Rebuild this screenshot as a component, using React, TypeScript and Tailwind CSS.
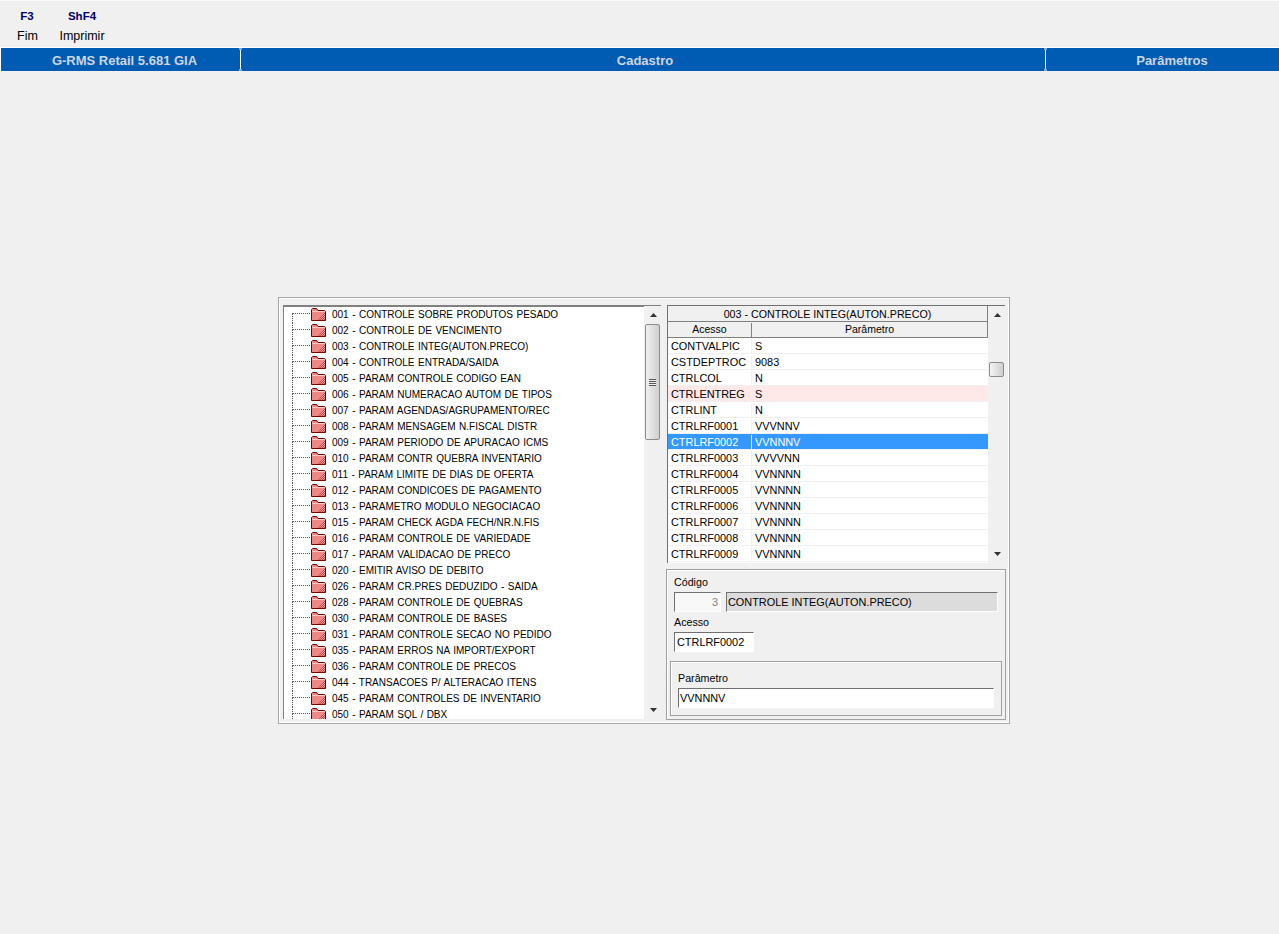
import React from 'react';

const treeItems = [
  '001 - CONTROLE SOBRE PRODUTOS PESADO',
  '002 - CONTROLE DE VENCIMENTO',
  '003 - CONTROLE INTEG(AUTON.PRECO)',
  '004 - CONTROLE ENTRADA/SAIDA',
  '005 - PARAM CONTROLE CODIGO EAN',
  '006 - PARAM NUMERACAO AUTOM DE TIPOS',
  '007 - PARAM AGENDAS/AGRUPAMENTO/REC',
  '008 - PARAM MENSAGEM N.FISCAL DISTR',
  '009 - PARAM PERIODO DE APURACAO ICMS',
  '010 - PARAM CONTR QUEBRA INVENTARIO',
  '011 - PARAM LIMITE DE DIAS DE OFERTA',
  '012 - PARAM CONDICOES DE PAGAMENTO',
  '013 - PARAMETRO MODULO NEGOCIACAO',
  '015 - PARAM CHECK AGDA FECH/NR.N.FIS',
  '016 - PARAM CONTROLE DE VARIEDADE',
  '017 - PARAM VALIDACAO DE PRECO',
  '020 - EMITIR AVISO DE DEBITO',
  '026 - PARAM CR.PRES DEDUZIDO - SAIDA',
  '028 - PARAM CONTROLE DE QUEBRAS',
  '030 - PARAM CONTROLE DE BASES',
  '031 - PARAM CONTROLE SECAO NO PEDIDO',
  '035 - PARAM ERROS NA IMPORT/EXPORT',
  '036 - PARAM CONTROLE DE PRECOS',
  '044 - TRANSACOES P/ ALTERACAO ITENS',
  '045 - PARAM CONTROLES DE INVENTARIO',
  '050 - PARAM SQL / DBX',
];

const gridRows = [
  ['CONTVALPIC', 'S'],
  ['CSTDEPTROC', '9083'],
  ['CTRLCOL', 'N'],
  ['CTRLENTREG', 'S'],
  ['CTRLINT', 'N'],
  ['CTRLRF0001', 'VVVNNV'],
  ['CTRLRF0002', 'VVNNNV'],
  ['CTRLRF0003', 'VVVVNN'],
  ['CTRLRF0004', 'VVNNNN'],
  ['CTRLRF0005', 'VVNNNN'],
  ['CTRLRF0006', 'VVNNNN'],
  ['CTRLRF0007', 'VVNNNN'],
  ['CTRLRF0008', 'VVNNNN'],
  ['CTRLRF0009', 'VVNNNN'],
];

const FolderIcon = () => (
  <svg width="15" height="13" viewBox="0 0 15 13" className="shrink-0">
    <defs>
      <pattern id="dither" width="2" height="2" patternUnits="userSpaceOnUse">
        <rect width="2" height="2" fill="#f09a9a" />
        <rect width="1" height="1" fill="#c84848" />
        <rect x="1" y="1" width="1" height="1" fill="#c84848" />
      </pattern>
    </defs>
    <path d="M0.5 12.5V1.5L1.5 0.5H5.5L7 2.5H13.5L14.5 3.5V12.5Z" fill="#ee8888" stroke="#7a0000" />
    <path d="M1 3.5H14" stroke="#ffc8c8" />
    <path d="M6 12L14 4V12Z" fill="url(#dither)" />
  </svg>
);

const ArrowUp = () => (
  <svg width="7" height="4" viewBox="0 0 7 4"><path d="M3.5 0L7 4H0Z" fill="#333" /></svg>
);

const ArrowDown = () => (
  <svg width="7" height="4" viewBox="0 0 7 4"><path d="M0 0H7L3.5 4Z" fill="#333" /></svg>
);

const BarSeparator = () => (
  <div className="flex w-[3px] shrink-0 flex-col items-center">
    <div className="h-[2px] w-[3px] bg-[#7fa8d8]" />
    <div className="w-px flex-1 bg-white" />
    <div className="h-[2px] w-[3px] bg-[#7fa8d8]" />
  </div>
);

const TreeRow = ({ label, first }: { label: string; first: boolean }) => (
  <div className="flex h-[16px] items-center whitespace-nowrap pl-[8px]">
    <div className="flex h-[16px] w-[18px] shrink-0 flex-col">
      <div className={`h-[8px] border-b border-dotted border-b-[#555] ${first ? '' : 'border-l border-l-[#555]'} -mt-px`} />
      <div className="h-[9px] border-l border-dotted border-l-[#555]" />
    </div>
    <div className="-mt-[2px] ml-px"><FolderIcon /></div>
    <span className="-mt-[2px] ml-[6px] text-[10px] text-black [word-spacing:0.7px]">{label}</span>
  </div>
);

const Field = ({ className, children }: { className: string; children?: React.ReactNode }) => (
  <div className={`flex items-center border border-b-white border-l-[#707070] border-r-white border-t-[#707070] text-[10.9px] ${className}`}>
    {children}
  </div>
);

export default function App() {
  return (
    <div className="h-[934px] w-[1279px] overflow-hidden bg-[#f0f0f0] font-['Liberation_Sans',Arial,sans-serif]">
      {/* function keys */}
      <div className="flex h-[47px] items-start border-t border-t-[#fafafa] pl-[17px] pt-[9px] text-center">
        <div className="w-[20px]">
          <div className="text-[11.5px] font-bold leading-[13px] text-[#000066]">F3</div>
          <div className="mt-[6px] text-[12.5px] leading-[14px] text-black">Fim</div>
        </div>
        <div className="ml-[21px] w-[48px]">
          <div className="text-[11.5px] font-bold leading-[13px] text-[#000066]">ShF4</div>
          <div className="mt-[6px] text-[12.5px] leading-[14px] text-black">Imprimir</div>
        </div>
      </div>

      {/* title bar */}
      <div className="flex h-[24px] border-t border-t-white bg-[#005bb2] text-center text-[13px] font-bold text-[#cdd6e2]">
        <div className="flex w-[239px] items-center justify-center border-l border-l-white pl-[9px] pt-[2px]">G-RMS Retail 5.681 GIA</div>
        <BarSeparator />
        <div className="flex w-[802px] items-center justify-center pl-[4px] pt-[2px]">Cadastro</div>
        <BarSeparator />
        <div className="flex flex-1 items-center justify-center pl-[18px] pt-[2px]">Parâmetros</div>
      </div>

      {/* main panel */}
      <div className="ml-[278px] mt-[226px] flex h-[427px] w-[732px] border border-[#a8a8a8] p-[3px] shadow-[inset_0_0_0_1px_#fff]">
        <div className="ml-px mt-[4px] flex h-[414px] w-[379px] border-l border-t-2 border-l-[#808080] border-t-[#808080] bg-white">
          <div className="flex-1 overflow-hidden">
            {treeItems.map((item, i) => (
              <TreeRow key={item} label={item} first={i === 0} />
            ))}
          </div>
          <div className="-mt-px flex w-[17px] shrink-0 flex-col items-start bg-[#f0f0f0] pl-px">
            <div className="flex h-[18px] w-[16px] items-center justify-center"><ArrowUp /></div>
            <div className="flex h-[116px] w-[15px] items-center justify-center rounded-[2px] border border-[#8c8c8c] bg-gradient-to-r from-[#f0f0f0] to-[#cfcfcf]">
              <div className="h-[7px] w-[7px] border-y border-[#555] bg-[linear-gradient(#f0f0f0_0_1px,#555_1px_2px,#f0f0f0_2px_3px,#555_3px_4px,#f0f0f0_4px)]" />
            </div>
            <div className="mt-auto flex h-[18px] w-[16px] items-center justify-center"><ArrowDown /></div>
          </div>
        </div>

        <div className="ml-[6px] mt-[4px] flex w-[339px] flex-col text-black">
          {/* parameter grid */}
          <div className="flex h-[258px] w-[338px] border-l border-t border-l-[#707070] border-t-[#707070] bg-white">
            <div className="flex-1 overflow-hidden">
              <div className="flex h-[16px] items-center justify-center border-b border-r border-[#808080] bg-[#f0f0f0] pt-px text-[10.7px]">003 - CONTROLE INTEG(AUTON.PRECO)</div>
              <div className="flex h-[16px] border-b border-r border-[#808080] bg-[#f0f0f0] pt-px text-[10.5px]">
                <div className="flex w-[84px] items-center justify-center border-r border-r-[#808080]">Acesso</div>
                <div className="flex flex-1 items-center justify-center">Parâmetro</div>
              </div>
              {gridRows.map(([code, value], i) => (
                <div
                  key={code}
                  className={`flex h-[16px] items-center border-b border-b-[#f0f0f0] pt-px text-[10.9px] ${i === 6 ? 'bg-[#3399ff] text-white' : i === 3 ? 'bg-[#ffe8e8]' : ''}`}
                >
                  <div className="flex h-full w-[84px] items-center border-r border-r-[#f0f0f0] pl-[3px]">{code}</div>
                  <div className="pl-[3px]">{value}</div>
                </div>
              ))}
            </div>
            <div className="flex w-[17px] shrink-0 flex-col items-start bg-[#f0f0f0] pl-px">
              <div className="flex h-[18px] w-[16px] items-center justify-center"><ArrowUp /></div>
              <div className="mt-[38px] h-[15px] w-[15px] rounded-[2px] border border-[#8c8c8c] bg-gradient-to-r from-[#f4f4f4] to-[#cfcfcf]" />
              <div className="mt-auto flex h-[18px] w-[16px] items-center justify-center"><ArrowDown /></div>
            </div>
          </div>

          {/* detail group */}
          <div className="-ml-px mt-[6px] h-[151px] w-[340px] shrink-0 border border-[#a0a0a0] pl-[7px] shadow-[inset_1px_1px_0_#fff]">
            <div className="mt-[5px] h-[14px] text-[10.7px] leading-[14px]">Código</div>
            <div className="mt-[3px] flex">
              <Field className="h-[20px] w-[47px] justify-end bg-[#f8f8f8] pr-[2px] text-[#808080]">3</Field>
              <Field className="ml-[5px] h-[20px] w-[272px] bg-[#dcdcdc] pl-px">CONTROLE INTEG(AUTON.PRECO)</Field>
            </div>
            <div className="mt-[3px] h-[14px] text-[10.7px] leading-[14px]">Acesso</div>
            <Field className="mt-[3px] h-[20px] w-[80px] bg-white pl-[2px]">CTRLRF0002</Field>
            <div className="-ml-[4px] mt-[9px] h-[55px] w-[332px] border border-[#a0a0a0] pl-[7px] shadow-[inset_1px_1px_0_#fff]">
              <div className="mt-[9px] h-[14px] text-[10.7px] leading-[14px]">Parâmetro</div>
              <Field className="mt-[3px] h-[20px] w-[316px] bg-white pl-px">VVNNNV</Field>
            </div>
          </div>
        </div>
      </div>
    </div>
  );
}
